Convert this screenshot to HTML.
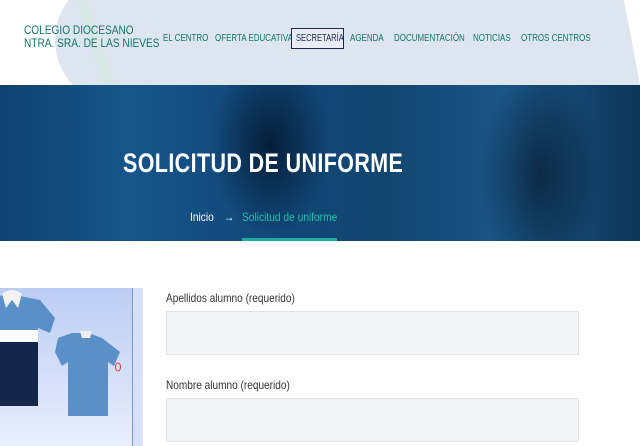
<!DOCTYPE html>
<html><head><meta charset="utf-8"><style>
*{margin:0;padding:0;box-sizing:border-box}
body{width:640px;height:446px;overflow:hidden;background:#fff;font-family:"Liberation Sans",sans-serif;position:relative}
.hdr{position:absolute;left:0;top:0;width:640px;height:85px;background:#fff;overflow:hidden}
.sh{position:absolute;background:#dde5ef}
.sx{transform-origin:left center;white-space:nowrap}
.logo{position:absolute;left:24px;top:25px;color:#14756c;font-size:11.5px;line-height:13px;transform:scaleX(0.88)}
.nav{position:absolute;top:32px;font-size:10.5px;color:#14756c;transform:scaleX(0.76)}
.sec{position:absolute;left:291px;top:28px;width:53px;height:21px;border:1.5px solid #1c2a50;background:#e9ecf6}
.sect{position:absolute;left:296px;top:32px;font-size:10.5px;color:#1c2a50;transform:scaleX(0.72)}
.ban{position:absolute;left:0;top:85px;width:640px;height:156px;background:radial-gradient(ellipse 60px 90px at 270px 60px,rgba(2,20,40,.8) 0%,transparent 100%),radial-gradient(ellipse 60px 110px at 540px 90px,rgba(7,26,44,.7) 0%,transparent 100%),linear-gradient(90deg,#0f4270 0%,#16558a 20%,#114677 45%,#124670 60%,#1a5688 80%,#0d3558 100%)}
.title{position:absolute;left:123px;top:148px;color:#fff;font-weight:bold;font-size:27px;letter-spacing:0.5px;transform:scaleX(0.795)}
.bc{position:absolute;top:210px;font-size:12px;transform:scaleX(0.85)}
.bar{position:absolute;left:242px;top:238px;width:95px;height:3px;background:#1fae9c}
.lab{position:absolute;left:166px;font-size:12px;color:#333;transform:scaleX(0.84)}
.inp{position:absolute;left:166px;width:413px;height:44px;background:#f3f4f6;border:1px solid #e2e4e8}
</style></head><body>
<div class="hdr">
<div class="sh" style="left:230px;top:0;width:410px;height:85px"></div>
<div class="sh" style="left:55px;top:-40px;width:200px;height:160px;border-radius:50%"></div>
<div class="sh" style="left:100px;top:10px;width:230px;height:60px;border-radius:30px"></div>
<div class="sh" style="left:600px;top:0;width:40px;height:85px;background:#fff;clip-path:polygon(60% 0,100% 0,100% 100%)"></div>
<div class="sh" style="left:75px;top:0;width:40px;height:85px;background:#d8e8e6;clip-path:polygon(0 0,30% 0,100% 100%,70% 100%)"></div>
<div class="logo sx">COLEGIO DIOCESANO<br>NTRA. SRA. DE LAS NIEVES</div>
<div class="nav sx" style="left:163px">EL CENTRO</div>
<div class="nav sx" style="left:215px">OFERTA EDUCATIVA</div>
<div class="sec"></div>
<div class="sect sx">SECRETARÍA</div>
<div class="nav sx" style="left:350px">AGENDA</div>
<div class="nav sx" style="left:394px">DOCUMENTACIÓN</div>
<div class="nav sx" style="left:473px">NOTICIAS</div>
<div class="nav sx" style="left:521px">OTROS CENTROS</div>
</div>
<div class="ban"></div>
<div class="title sx">SOLICITUD DE UNIFORME</div>
<div class="bc sx" style="left:190px;color:#fff">Inicio</div>
<div class="bc sx" style="left:224px;color:#fff">→</div>
<div class="bc sx" style="left:242px;color:#1fc0a8">Solicitud de uniforme</div>
<div class="bar"></div>
<div style="position:absolute;left:0;top:288px;width:132px;height:158px;background:linear-gradient(180deg,#bccdf4,#e8eefc)"></div>
<div style="position:absolute;left:132px;top:288px;width:11px;height:158px;background:#d6e0fa;border-left:1px solid #7f95cc"></div>
<svg style="position:absolute;left:0;top:288px" width="132" height="158">
<path d="M0 8 L10 4 L20 8 L40 12 L55 30 L50 45 L38 40 L38 118 L0 118 Z" fill="#5b8fc8"/>
<rect x="0" y="42" width="38" height="12" fill="#fff"/>
<rect x="0" y="54" width="38" height="64" fill="#14264a"/>
<path d="M2 6 Q12 -2 22 6 L18 20 L12 12 L6 20Z" fill="#f2f2f2"/>
<path d="M58 50 L72 45 L88 45 L102 50 L120 64 L114 78 L108 74 L108 128 L68 128 L68 74 L62 78 L55 64Z" fill="#5b8fc8"/>
<path d="M80 43 L92 43 L90 50 L82 50Z" fill="#eee"/>
<ellipse cx="118" cy="79" rx="2.5" ry="4" fill="none" stroke="#e33" stroke-width="1"/>
</svg>
<div class="lab sx" style="top:291px">Apellidos alumno (requerido)</div>
<div class="inp" style="top:311px"></div>
<div class="lab sx" style="top:378px">Nombre alumno (requerido)</div>
<div class="inp" style="top:398px"></div>
</body></html>
